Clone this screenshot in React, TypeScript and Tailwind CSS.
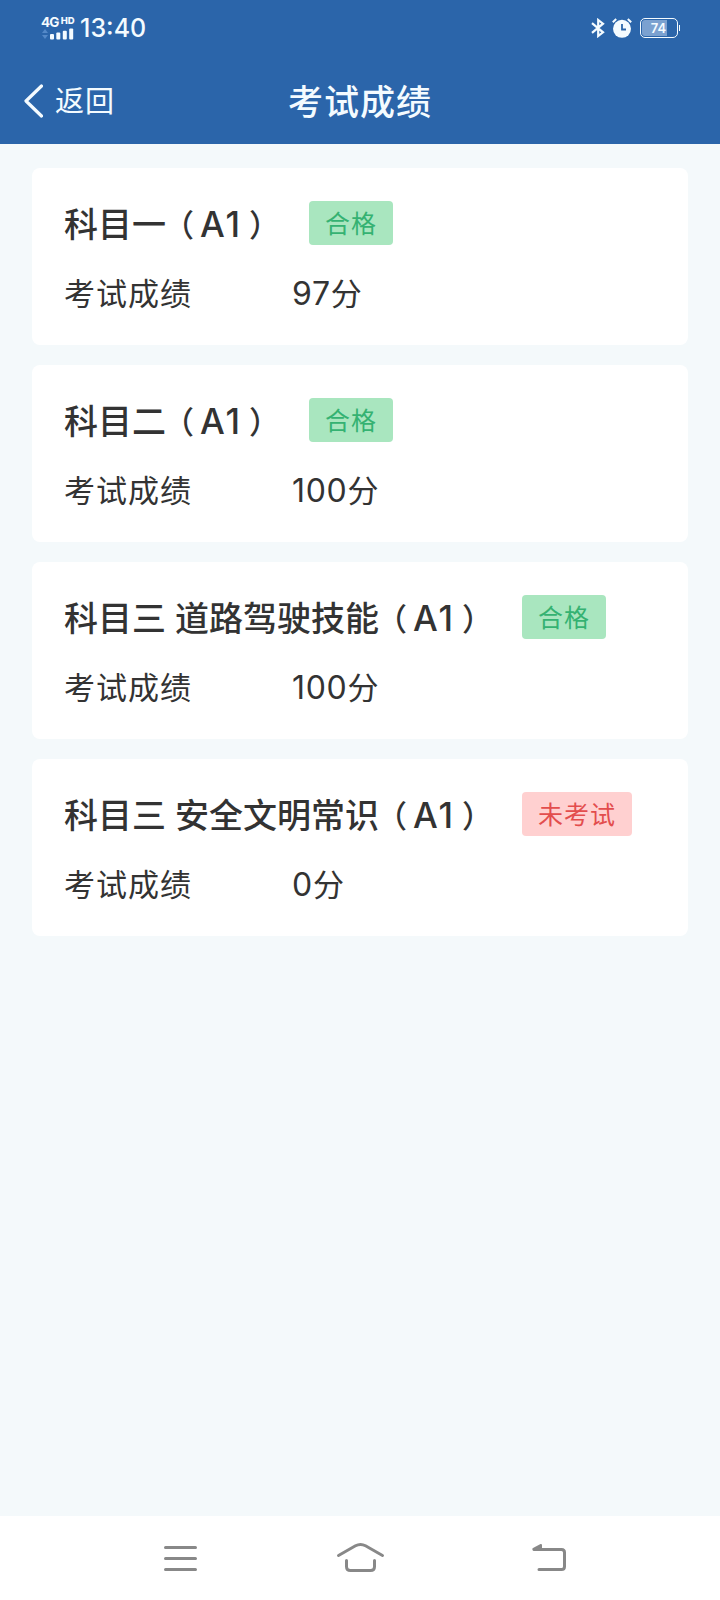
import clsx from 'clsx';

type Status = 'passed' | 'pending';

interface ExamResult {
  id: number;
  subject: string;
  level: string;
  score: number;
  status: Status;
}

const results: ExamResult[] = [
  { id: 1, subject: '科目一', level: 'A1', score: 97, status: 'passed' },
  { id: 2, subject: '科目二', level: 'A1', score: 100, status: 'passed' },
  { id: 3, subject: '科目三 道路驾驶技能', level: 'A1', score: 100, status: 'passed' },
  { id: 4, subject: '科目三 安全文明常识', level: 'A1', score: 0, status: 'pending' },
];

const statusLabels: Record<Status, string> = {
  passed: '合格',
  pending: '未考试',
};

const SignalIcon = () => (
  <svg width="32" height="12" viewBox="0 0 32 12" aria-hidden="true">
    <path d="M0 5 3 1l3 4zM0 7l3 4 3-4z" fill="#5489c8" />
    <g fill="#f4fbff">
      <rect x="8" y="6" width="4" height="5.5" rx="1" />
      <rect x="14.3" y="4.5" width="4" height="7" rx="1" />
      <rect x="20.8" y="2.8" width="4" height="8.7" rx="1" />
      <rect x="27.2" y="0.5" width="4" height="11" rx="1" />
    </g>
  </svg>
);

const BluetoothIcon = () => (
  <svg width="14" height="20" viewBox="0 0 14 20" fill="none" stroke="#f4fbff" strokeWidth="2.2" aria-hidden="true">
    <path d="M1 5.2 12 14.3 7.2 18V2L12 5.7 1 14.8" />
  </svg>
);

const AlarmIcon = () => (
  <svg width="20" height="20" viewBox="0 0 20 20" fill="none" aria-hidden="true">
    <circle cx="10" cy="10.8" r="9" fill="#f4fbff" />
    <path d="M0.8 4.2 4.2 1M19.2 4.2 15.8 1" stroke="#f4fbff" strokeWidth="2" />
    <path d="M10 6v5.5h4" stroke="#2b65aa" strokeWidth="1.8" />
  </svg>
);

const Battery = ({ level }: { level: number }) => (
  <div className="flex items-center">
    <div className="relative flex h-5 w-[38px] items-center justify-center rounded-[5px] border-[1.5px] border-[#f4fbff]">
      <div className="absolute inset-px overflow-hidden rounded-[3px]">
        <div className="h-full bg-[#7ba1d0]" style={{ width: `${level}%` }} />
      </div>
      <span className="relative text-[13px] leading-none font-semibold">{level}</span>
    </div>
    <div className="ml-px h-1.5 w-[1.5px] bg-[#f4fbff]" />
  </div>
);

const StatusBar = () => (
  <div className="flex h-14 items-center justify-between pr-10 pl-[42px] text-[#f4fbff]">
    <div className="flex items-center gap-[6px]">
      <div className="flex w-8 flex-col">
        <div className="-ml-px flex h-[11px] items-start font-bold">
          <span className="text-[13.5px] leading-[10px] tracking-[-0.8px]">4G</span>
          <span className="ml-0.5 text-[9.5px] leading-[8px] font-extrabold">HD</span>
        </div>
        <SignalIcon />
      </div>
      <span className="pt-px text-[25px] leading-none font-medium">13:40</span>
    </div>
    <div className="flex items-center">
      <BluetoothIcon />
      <div className="mr-2 ml-[7px]">
        <AlarmIcon />
      </div>
      <Battery level={74} />
    </div>
  </div>
);

const Header = () => (
  <header className="h-36 bg-[#2b65aa]">
    <StatusBar />
    <div className="grid h-[88px] grid-cols-[1fr_auto_1fr] items-center text-[#f4fbff]">
      <button type="button" className="flex items-center gap-3 pt-px pl-6 text-[29px] leading-none tracking-[1px]">
        <svg width="19" height="34" viewBox="0 0 19 34" fill="none" aria-hidden="true">
          <path d="M17.5 2 2 17l15.5 15" stroke="#f4fbff" strokeWidth="3.2" strokeLinecap="round" strokeLinejoin="round" />
        </svg>
        <span className="pt-px">返回</span>
      </button>
      <h1 className="pt-[5px] text-[35px] leading-none font-medium tracking-[1px]">考试成绩</h1>
    </div>
  </header>
);

const ResultCard = ({ result }: { result: ExamResult }) => (
  <li className="h-[177px] rounded-lg bg-white px-8 pt-[33px] text-[#333333]">
    <div className="flex h-11 items-center gap-8">
      <h2 className="flex items-center pt-[3px] text-[34px] leading-none font-medium whitespace-nowrap">
        <span>{result.subject}</span>
        <span className="-ml-[3px] w-[37px] text-[31px]">（</span>
        <span className="w-[43px] text-[35px] tracking-[2px]">{result.level}</span>
        <span className="w-[34px] pl-1.5 text-[31px]">）</span>
      </h2>
      <span
        className={clsx(
          'flex h-11 items-center rounded px-4 pt-[3px] text-[25px] leading-none tracking-[1px]',
          result.status === 'passed' ? 'bg-[#a9e6bf] text-[#35b272]' : 'bg-[#ffd0d0] text-[#e34d4d]',
        )}
      >
        {statusLabels[result.status]}
      </span>
    </div>
    <dl className="mt-6 flex h-12 items-center text-[31px] leading-none">
      <dt className="w-[228px] tracking-[1px]">考试成绩</dt>
      <dd className="flex items-center">
        <span className="pt-0.5 text-[32px] tracking-[0.7px]">{result.score}</span>
        <span>分</span>
      </dd>
    </dl>
  </li>
);

const NavBar = () => (
  <nav className="flex h-[84px] items-center bg-white">
    <svg width="720" height="84" viewBox="0 0 720 84" fill="none" stroke="#888888" strokeWidth="3" strokeLinecap="round" strokeLinejoin="round" aria-hidden="true">
      <path d="M165.5 31.5h30M165.5 42.5h30M165.5 53.5h30" />
      <path d="M338.5 39.5 355.5 29.8Q360.5 27 365.5 29.8L382.5 39.5M346.5 44.5v6q0 4 4 4h20q4 0 4-4v-6" />
      <path d="M539 53.5h22.5q3 0 3-3v-14q0-3-3-3H534" />
      <path d="M533.5 33 541 29v4z" fill="#888888" strokeWidth="2" />
    </svg>
  </nav>
);

export default function App() {
  return (
    <div className="flex h-[1600px] w-[720px] flex-col bg-[#f4f9fb] font-[Inter,'Noto_Sans_CJK_SC',sans-serif]">
      <Header />
      <main className="flex-1 px-8 pt-6">
        <ul className="flex flex-col gap-5">
          {results.map((result) => (
            <ResultCard key={result.id} result={result} />
          ))}
        </ul>
      </main>
      <NavBar />
    </div>
  );
}
